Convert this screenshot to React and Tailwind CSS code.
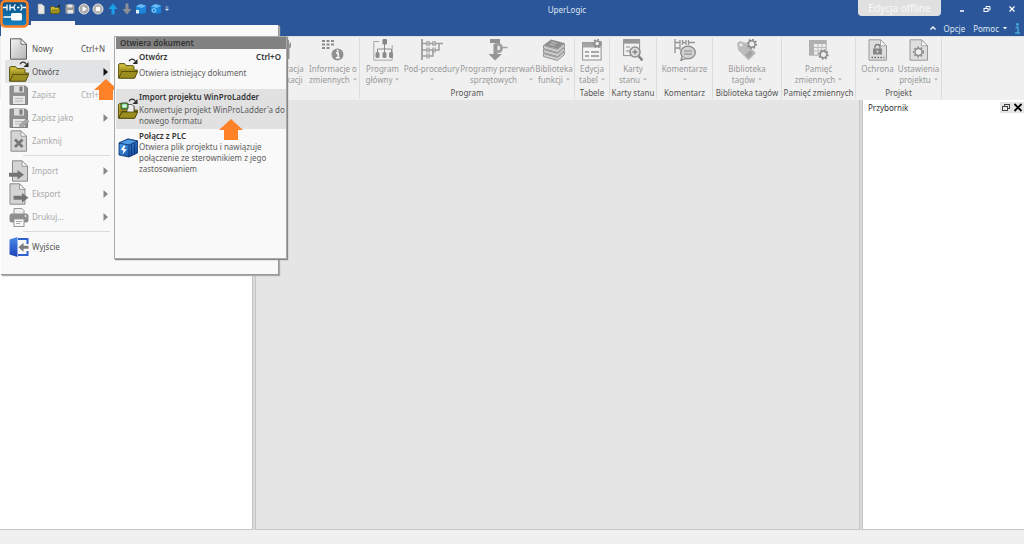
import React from 'react';
import clsx from 'clsx';

/* ---------- shared svg pieces ---------- */

const Defs = () => (
  <svg width="0" height="0" className="absolute" aria-hidden="true">
    <defs>
      <linearGradient id="paper" x1="0" y1="0" x2="1" y2="1">
        <stop offset="0" stopColor="#f4f4f4" />
        <stop offset="1" stopColor="#b4b4b4" />
      </linearGradient>
      <linearGradient id="folder" x1="0" y1="0" x2="0" y2="1">
        <stop offset="0" stopColor="#d8c84a" />
        <stop offset="1" stopColor="#8f7f14" />
      </linearGradient>
      <linearGradient id="logo" x1="0" y1="0" x2="0" y2="1">
        <stop offset="0" stopColor="#0a4f86" />
        <stop offset="1" stopColor="#1583c4" />
      </linearGradient>
      <linearGradient id="cube" x1="0" y1="0" x2="1" y2="1">
        <stop offset="0" stopColor="#4aa6f0" />
        <stop offset="1" stopColor="#0b3f94" />
      </linearGradient>
      <linearGradient id="door" x1="0" y1="0" x2="0" y2="1">
        <stop offset="0" stopColor="#4a8ae8" />
        <stop offset="1" stopColor="#1c43b8" />
      </linearGradient>
    </defs>
  </svg>
);

const Svg = ({ children, className = 'w-5 h-[22px]', box = '0 0 20 22' }) => (
  <svg viewBox={box} className={clsx('shrink-0', className)} fill="none" aria-hidden="true">
    {children}
  </svg>
);

const Paper = () => (
  <>
    <path d="M1.500.8h10.500l5.500 5.500v14.900h-16z" fill="url(#paper)" stroke="#5c5c5c" />
    <path d="M12 .8v5.500h5.500z" fill="#f6f6f6" stroke="#5c5c5c" strokeWidth=".8" />
  </>
);

const DimPaper = () => (
  <>
    <path d="M2 .8h10l5.500 5.500v14.900H2z" fill="#d4d4d4" stroke="#8c8c8c" />
    <path d="M12 .8v5.500h5.500z" fill="#f6f6f6" stroke="#8c8c8c" strokeWidth=".8" />
  </>
);

/* ---------- menu icons ---------- */

const NewIcon = () => <Svg><Paper /></Svg>;

const Folder = () => (
  <>
    <path d="M.5 20V6.500l1-1h5L8 7.500h7l1 1V12h3.500l-3 8z" fill="#a8981f" stroke="#4d440a" strokeWidth=".8" />
    <path d="M1.500 6.500h5L8 8.500h7V14H1.500z" fill="url(#folder)" />
    <path d="M.8 20.200l3-6.700h15.900l-3.100 6.700z" fill="#9c8d20" stroke="#4d440a" strokeWidth=".8" />
    <path d="M11 3.200C12.500.6 15.500.5 17.300 3" stroke="#333" strokeWidth="1.200" />
    <path d="M19.500 1v5h-5z" fill="#2a2a2a" />
  </>
);

const OpenIcon = () => <Svg><Folder /></Svg>;

const ImportProjectIcon = () => (
  <Svg>
    <Folder />
    <path d="M9 6.500h5l2 2V15H9z" fill="#eee" stroke="#444" strokeWidth=".8" />
    <rect x="3" y="5" width="7" height="6" rx="1" fill="#6ad04a" stroke="#333" />
    <rect x="4.500" y="6.500" width="4" height="3" fill="#d4f2fa" />
    <path d="M.8 20.200l3-6.200h15.900l-3.100 6.200z" fill="#9c8d20" stroke="#4d440a" strokeWidth=".8" />
  </Svg>
);

const Floppy = () => (
  <>
    <path d="M1 2h15.500l2 2v16.500H1z" fill="#8f8f8f" stroke="#808080" />
    <rect x="5" y="2" width="10" height="6.500" fill="#dcdcdc" />
    <rect x="10.500" y="2.500" width="3" height="5" fill="#7a7a7a" />
    <rect x="4" y="12" width="12" height="8" fill="#e6e6e6" />
    <path d="M6 14.500h8M6 17h8" stroke="#b5b5b5" />
  </>
);

const SaveIcon = () => <Svg><Floppy /></Svg>;

const SaveAsIcon = () => (
  <Svg>
    <Floppy />
    <path d="M10 21l1-3.500 6.500-5.500 2.500 2.500-6.500 5.500z" fill="#a8a8a8" stroke="#8a8a8a" strokeWidth=".6" />
  </Svg>
);

const CloseIcon = () => (
  <Svg>
    <DimPaper />
    <path d="M6 9.500l7.500 7.500M13.500 9.500L6 17" stroke="#777" strokeWidth="2.800" />
  </Svg>
);

const ImportIcon = () => (
  <Svg>
    <path d="M3.500.8H13l5.500 5.500v14.900h-15z" fill="#d4d4d4" stroke="#8c8c8c" />
    <path d="M13 .8v5.500h5.500z" fill="#f6f6f6" stroke="#8c8c8c" strokeWidth=".8" />
    <path d="M0 12.800h8.500V10l6.500 4.800-6.500 4.800v-2.800H0z" fill="#747474" />
  </Svg>
);

const ExportIcon = () => (
  <Svg>
    <path d="M1 .8h9.500l5.500 5.500v14.900H1z" fill="#d4d4d4" stroke="#8c8c8c" />
    <path d="M10.500.8v5.500h5.500z" fill="#f6f6f6" stroke="#8c8c8c" strokeWidth=".8" />
    <path d="M4.500 12.800h8.500V10l6.500 4.800-6.500 4.800v-2.800H4.500z" fill="#747474" />
  </Svg>
);

const PrintIcon = () => (
  <Svg>
    <path d="M5 9V2.500h8l2 2V9" fill="#eee" stroke="#999" />
    <rect x=".5" y="7.500" width="19" height="9" rx="2.500" fill="#8e8e8e" />
    <circle cx="16.500" cy="10" r=".9" fill="#eee" />
    <rect x="5" y="13" width="10" height="7.500" fill="#f8f8f8" stroke="#999" />
    <path d="M7 15.500h6M7 17.500h4" stroke="#aaa" />
  </Svg>
);

const ExitIcon = () => (
  <Svg>
    <path d="M9 3h9.500v5M9 19h9.500v-4" stroke="#2f62cf" strokeWidth="2" />
    <path d="M.5 3.500L8.500 1v20L.5 18.500z" fill="url(#door)" />
    <path d="M9.500 11.200l5-4.500v3h5v3h-5v3z" fill="#7c7c7c" />
  </Svg>
);

const PlcIcon = () => (
  <Svg>
    <path d="M1 6l9-4 9.500 2v12L11 20 1 18z" fill="url(#cube)" stroke="#0a2f6c" strokeWidth=".8" />
    <path d="M1 6l10 2 8.500-4L10 2z" fill="#4f9be6" stroke="#0a2f6c" strokeWidth=".8" />
    <path d="M11 8v12M13.500 7.200v11.500M16.500 6v11.500" stroke="#0a2f6c" strokeWidth=".8" />
    <path d="M5.500 8.500L3 13l2.500.5L4.500 17.500 8.800 12.500 6 12l1.500-3.200z" fill="#fff" />
  </Svg>
);

/* ---------- ribbon icons ---------- */

const WrenchIcon = () => (
  <Svg box="0 0 22 22" className="w-[22px] h-[22px]">
    <path d="M18 1v4l-2-1v4l1.500 1.500V20h3V9.500L22 8V3l-2 2V1z" fill="#959595" />
    <path d="M2 3h10v3H2zM6 6h3v14H6z" fill="#aaa" />
  </Svg>
);

const VariablesIcon = () => (
  <Svg box="0 0 22 22" className="w-[22px] h-[22px]">
    <path d="M0 2h3M4.500 2h3M9 2h3M0 5.500h3M4.500 5.500h3M9 5.500h3M4.500 9h3M0 9h3" stroke="#8c8c8c" strokeWidth="2.200" />
    <circle cx="15.500" cy="15.500" r="6" fill="#909090" />
    <path d="M14 14h2.200v4.500M13.800 18.700h4" stroke="#fff" strokeWidth="1.400" />
    <circle cx="15.600" cy="11.800" r="1" fill="#fff" />
  </Svg>
);

const ProgramIcon = () => (
  <Svg>
    <path d="M6 2.500H.8v18.700h18.400V6" stroke="#a8a8a8" />
    <path d="M11.500 5v6M4.500 14v-4h14v4M11.500 10v4" stroke="#8c8c8c" />
    <rect x="9.500" y="0" width="4.500" height="5.500" rx="1" fill="#858585" />
    <rect x="2.500" y="13" width="4" height="6" rx="1.500" fill="#8c8c8c" />
    <rect x="9.500" y="13" width="4" height="6" rx="1.500" fill="#8c8c8c" />
    <rect x="16" y="13" width="4" height="6" rx="1.500" fill="#8c8c8c" />
  </Svg>
);

const SubroutineIcon = () => (
  <Svg box="0 0 22 22" className="w-[22px] h-[22px]">
    <path d="M1 0v21" stroke="#909090" strokeWidth="1.600" />
    <path d="M1 4.500h5M8 4.500h4M14 4.500h8M1 11h5M8 11h4M14 11h4V4.500M1 17h5M8 17h4V11" stroke="#a0a0a0" strokeWidth="1.500" />
    <path d="M6 2v5M8 2v5M12 2v5M14 2v5M6 8.500v5M8 8.500v5M12 8.500v5M14 8.500v5M6 14.500v5M8 14.500v5" stroke="#979797" strokeWidth="1.200" />
  </Svg>
);

const InterruptIcon = () => (
  <Svg>
    <path d="M5.500 5h4v10H14l-7 6.500L.5 15h5z" fill="#959595" />
    <path d="M7 5.500h4.500a4 4 0 010 7H7" stroke="#a0a0a0" strokeWidth="3" />
    <path d="M15 8.500h4.500" stroke="#a0a0a0" strokeWidth="1.500" />
    <rect x="2" y="0" width="10" height="4" fill="#909090" />
  </Svg>
);

const BooksIcon = () => (
  <Svg box="0 0 22 22" className="w-[22px] h-[22px]">
    <path d="M.5 6L8 .5 21.500 4l-7 6z" fill="#8f8f8f" />
    <path d="M8.500 3l5 1.500M7 5l5 1.500" stroke="#c8c8c8" />
    <path d="M.5 6.500v3l14 4 7-6v-3l-7 6z" fill="#d0d0d0" stroke="#8a8a8a" strokeWidth=".9" />
    <path d="M.5 10.500v3l14 4 7-6v-3l-7 6z" fill="#d0d0d0" stroke="#8a8a8a" strokeWidth=".9" />
    <path d="M.5 14.500v3l14 4 7-6v-3l-7 6z" fill="#d0d0d0" stroke="#8a8a8a" strokeWidth=".9" />
  </Svg>
);

const Gear = ({ x, y, r = 3.2 }) => (
  <g transform={`translate(${x} ${y})`}>
    <circle r={r + 1.2} stroke="#8c8c8c" strokeWidth="1.800" strokeDasharray="1.700 1.700" />
    <circle r={r} fill="#efefef" stroke="#8c8c8c" strokeWidth="1.400" />
  </g>
);

const EditTableIcon = () => (
  <Svg>
    <rect x=".6" y="3.500" width="18.500" height="17.500" fill="#f4f4f4" stroke="#909090" />
    <rect x=".6" y="3.500" width="18.500" height="5" fill="#a5a5a5" />
    <path d="M3 13h4M9 13h8M3 17h4M9 17h8" stroke="#909090" strokeWidth="1.400" />
    <Gear x={15.2} y={4.5} r={2.5} />
  </Svg>
);

const CardIcon = () => (
  <Svg>
    <rect x=".6" y=".6" width="16" height="16" fill="#f0f0f0" stroke="#909090" />
    <rect x=".6" y=".6" width="16" height="4" fill="#989898" />
    <path d="M3 8h4M3 12h4" stroke="#909090" />
    <path d="M15.500 17l4 4.500" stroke="#858585" strokeWidth="2.600" />
    <circle cx="12" cy="13" r="5" fill="#ddd" stroke="#909090" strokeWidth="1.600" />
    <path d="M9.500 13h5M12 10.500v5" stroke="#858585" strokeWidth="1.300" />
  </Svg>
);

const CommentIcon = () => (
  <Svg box="0 0 22 22" className="w-[22px] h-[22px]">
    <path d="M1 0v14M1 3.500h5M8 3.500h4M14 3.500h7M6 1v10M8.500 1v5M12 1v5M14.500 1v5M1 9h5" stroke="#959595" strokeWidth="1.300" />
    <ellipse cx="14" cy="13.500" rx="7.300" ry="6.300" fill="#d2d2d2" stroke="#8a8a8a" strokeWidth="1.300" />
    <path d="M8.300 17l-1.500 4.500 5-2" fill="#d2d2d2" stroke="#8a8a8a" strokeWidth="1.200" />
    <path d="M10 12h8M10 15h8" stroke="#8a8a8a" strokeWidth="1.200" />
  </Svg>
);

const TagsIcon = () => (
  <Svg>
    <path d="M0 4l3-2 6 2 10 10-7.500 7.500L1 11z" fill="#bcbcbc" />
    <path d="M8 16l5-5 3.500 3.500-5 5z" fill="#a4a4a4" />
    <circle cx="4" cy="6" r="1.500" fill="#f0f0f0" />
    <Gear x={14.8} y={5} />
  </Svg>
);

const MemoryIcon = () => (
  <Svg>
    <rect x=".6" y="1.600" width="16.500" height="14.500" fill="#eee" stroke="#a5a5a5" />
    <path d="M.6 1.600h16.500v3.500H5v11H.6z" fill="#b0b0b0" />
    <path d="M5 8.500h12M5 12h12M9 5v11M13 5v11" stroke="#bbb" />
    <Gear x={14.5} y={15.5} />
  </Svg>
);

const LockIcon = () => (
  <Svg>
    <path d="M1 .8h11.500l6 6v14.400H1z" fill="#dedede" stroke="#9a9a9a" />
    <path d="M12.500.8v6h6z" fill="#f6f6f6" stroke="#9a9a9a" strokeWidth=".8" />
    <path d="M7 9.500V8a2.500 2.500 0 015 0v2.500" stroke="#7c7c7c" strokeWidth="1.300" />
    <rect x="5" y="9.500" width="9" height="6" fill="#868686" />
    <circle cx="9.500" cy="12.500" r="1" fill="#ddd" />
    <path d="M3.500 18.500h13" stroke="#666" strokeWidth="1.500" strokeDasharray="1.500 1.500" />
  </Svg>
);

const ProjectSettingsIcon = () => (
  <Svg>
    <path d="M1 .8h11.500l6 6v14.400H1z" fill="#dedede" stroke="#9a9a9a" />
    <path d="M12.500.8v6h6z" fill="#f6f6f6" stroke="#9a9a9a" strokeWidth=".8" />
    <Gear x={9.5} y={13} r={3.5} />
  </Svg>
);

const Caret = () => (
  <svg viewBox="0 0 4 3" className="w-1 h-[3px] shrink-0" aria-hidden="true">
    <path d="M0 .5h4L2 2.500z" fill="#b0b0b0" />
  </svg>
);

const OrangeArrow = ({ className }) => (
  <svg viewBox="0 0 24 21" className={className} aria-hidden="true">
    <path d="M12 0l12 11h-5v10H5V11H0z" fill="#ff8128" />
  </svg>
);

/* ---------- data ---------- */

const quickAccess = [
  { name: 'Nowy', art: <path d="M3 1h4l2.500 2.500V11H3z" fill="#e8e8e8" stroke="#888" strokeWidth=".6" /> },
  {
    name: 'Otwórz',
    art: (
      <>
        <path d="M1.500 10.500v-7H5l1 1h4V6h1l-1.200 4.500z" fill="#c9b82c" stroke="#3f380c" strokeWidth=".5" />
        <path d="M2 10.500L3.500 7h8L10 10.500z" fill="#a3931d" stroke="#3f380c" strokeWidth=".4" />
        <path d="M11 1v3H8z" fill="#222" />
      </>
    ),
  },
  {
    name: 'Zapisz',
    art: (
      <>
        <path d="M1.500 1.500h8l1 1v8h-9z" fill="#999" />
        <path d="M3.500 1.500h5v3h-5zM3.500 7H9v3.500H3.500z" fill="#e8e8e8" />
      </>
    ),
  },
  {
    name: 'Uruchom',
    art: (
      <>
        <circle cx="6" cy="6" r="5" fill="#aaa" stroke="#e2e2e2" />
        <path d="M4.500 3.200L9 6 4.500 8.800z" fill="#fff" />
      </>
    ),
  },
  {
    name: 'Zatrzymaj',
    art: (
      <>
        <circle cx="6" cy="6" r="5" fill="#aaa" stroke="#e2e2e2" />
        <rect x="3.800" y="3.800" width="4.400" height="4.400" fill="#fff" />
      </>
    ),
  },
  { name: 'Wyślij', art: <path d="M6 .5L10.500 6h-3v5.500h-3V6h-3z" fill="#1aa0e6" /> },
  { name: 'Pobierz', art: <path d="M6 11.500L1.500 6h3V.5h3V6h3z" fill="#8d8f94" /> },
  {
    name: 'Połącz',
    art: (
      <>
        <path d="M1 3.500L5 1l6 1.500v7L7 11 1 9z" fill="#1b86dc" />
        <path d="M1 3.500L5 1l6 1.500L7 5z" fill="#69baf5" />
        <path d="M1 7h3v3.500H1z" fill="#dff0ff" />
      </>
    ),
  },
  {
    name: 'Symulacja',
    art: (
      <>
        <path d="M1 3.500L5 1l6 1.500v7L7 11 1 9z" fill="#1b86dc" />
        <path d="M1 3.500L5 1l6 1.500L7 5z" fill="#69baf5" />
        <circle cx="4" cy="7.500" r="1.800" stroke="#9ed3ff" fill="none" />
      </>
    ),
  },
];

const ribbonGroups = [
  {
    label: '',
    width: 'w-[360px]',
    items: [
      { icon: <WrenchIcon />, top: 'Konfiguracja', bottom: 'komunikacji', noCaret: true, width: 'w-[54px]' },
      { icon: <VariablesIcon />, top: 'Informacje o', bottom: 'zmiennych', width: 'w-[52px]' },
    ],
  },
  {
    label: 'Program',
    width: 'w-[215px]',
    items: [
      { icon: <ProgramIcon />, top: 'Program', bottom: 'główny', width: 'w-[42px]' },
      { icon: <SubroutineIcon />, top: 'Pod-procedury', bottom: '', width: 'w-14' },
      { icon: <InterruptIcon />, top: 'Programy przerwań', bottom: 'sprzętowych', spread: true, width: 'w-[76px]' },
      { icon: <BooksIcon />, top: 'Biblioteka', bottom: 'funkcji', width: 'w-[37px]' },
    ],
  },
  {
    label: 'Tabele',
    width: 'w-[35px]',
    items: [{ icon: <EditTableIcon />, top: 'Edycja', bottom: 'tabel', width: 'w-8' }],
  },
  {
    label: 'Karty stanu',
    width: 'w-[47px]',
    items: [{ icon: <CardIcon />, top: 'Karty', bottom: 'stanu', width: 'w-11' }],
  },
  {
    label: 'Komentarz',
    width: 'w-14',
    items: [{ icon: <CommentIcon />, top: 'Komentarze', bottom: '', width: 'w-[52px]' }],
  },
  {
    label: 'Biblioteka tagów',
    width: 'w-[69px]',
    items: [{ icon: <TagsIcon />, top: 'Biblioteka', bottom: 'tagów', width: 'w-16' }],
  },
  {
    label: 'Pamięć zmiennych',
    width: 'w-[74px]',
    items: [{ icon: <MemoryIcon />, top: 'Pamięć', bottom: 'zmiennych', width: 'w-[68px]' }],
  },
  {
    label: 'Projekt',
    width: 'w-[86px]',
    items: [
      { icon: <LockIcon />, top: 'Ochrona', bottom: '', width: 'w-10' },
      { icon: <ProjectSettingsIcon />, top: 'Ustawienia', bottom: 'projektu', width: 'w-[42px]' },
    ],
  },
];

const menuSections = [
  [
    { icon: <NewIcon />, label: 'Nowy', shortcut: 'Ctrl+N' },
    { icon: <OpenIcon />, label: 'Otwórz', arrow: true, active: true },
    { icon: <SaveIcon />, label: 'Zapisz', shortcut: 'Ctrl+S', disabled: true },
    { icon: <SaveAsIcon />, label: 'Zapisz jako', arrow: true, disabled: true },
    { icon: <CloseIcon />, label: 'Zamknij', disabled: true },
  ],
  [
    { icon: <ImportIcon />, label: 'Import', arrow: true, disabled: true },
    { icon: <ExportIcon />, label: 'Eksport', arrow: true, disabled: true },
    { icon: <PrintIcon />, label: 'Drukuj...', arrow: true, disabled: true },
  ],
  [{ icon: <ExitIcon />, label: 'Wyjście' }],
];

/* ---------- components ---------- */

const TitleBar = () => (
  <header className="bg-[#2b579a] text-[#dfe6f2] h-9 shrink-0">
    <div className="flex items-start h-5">
      <div className="flex items-center justify-between h-[18px] w-[170px] pl-[35px]">
        {quickAccess.map((q) => (
          <button key={q.name} aria-label={q.name} className="block">
            <svg viewBox="0 0 12 12" className="w-3 h-3">{q.art}</svg>
          </button>
        ))}
        <svg viewBox="0 0 6 6" className="w-[6px] h-[6px]" aria-hidden="true">
          <path d="M1.500 1h3M1.500 3h3L3 4.500z" stroke="#dfe6f2" fill="#dfe6f2" strokeWidth=".7" />
        </svg>
      </div>
      <h1 className="flex-1 text-center pl-[106px] leading-5">UperLogic</h1>
      <span className="w-[83px] h-4 rounded-b bg-[#e0e0e0] text-[#f8f8f8] text-[10px] leading-[17px] text-center">
        Edycja offline
      </span>
      <div className="flex items-center justify-around w-[83px] h-[17px] pl-[9px]">
        <button aria-label="Minimalizuj" className="w-5 flex justify-center">
          <svg viewBox="0 0 8 8" className="w-2 h-2"><path d="M2 6h4" stroke="#fff" strokeWidth="1.500" /></svg>
        </button>
        <button aria-label="Przywróć" className="w-5 flex justify-center">
          <svg viewBox="0 0 8 8" className="w-2 h-2" fill="none" stroke="#fff">
            <path d="M3 3V1.500h4V5H5.500" /><rect x="1" y="3.500" width="4" height="3" />
          </svg>
        </button>
        <button aria-label="Zamknij" className="w-5 flex justify-center">
          <svg viewBox="0 0 8 8" className="w-2 h-2"><path d="M1.500 1.500l5 5M6.500 1.500l-5 5" stroke="#fff" strokeWidth="1.200" /></svg>
        </button>
      </div>
    </div>
    <div className="flex items-start justify-between h-4">
      <button aria-label="Plik" className="ml-[31px] mt-px w-11 h-4 bg-[#f7f7f7]" />
      <div className="flex items-center h-4 pr-1 gap-2">
        <button aria-label="Zwiń wstążkę">
          <svg viewBox="0 0 6 6" className="w-[6px] h-[6px]"><path d="M.5 4.500L3 2l2.500 2.500" stroke="#fff" strokeWidth="1.300" fill="none" /></svg>
        </button>
        <button>Opcje</button>
        <button className="flex items-center gap-1">
          Pomoc
          <svg viewBox="0 0 4 3" className="w-1 h-[3px]"><path d="M0 0h4L2 2.500z" fill="#fff" /></svg>
        </button>
        <svg viewBox="0 0 5 11" className="w-[5px] h-[11px]" aria-hidden="true">
          <circle cx="2.500" cy="1.500" r="1.400" fill="#4aa8dc" />
          <path d="M.5 4.500h2.500v5M0 10h5" stroke="#4aa8dc" strokeWidth="1.400" fill="none" />
        </svg>
      </div>
    </div>
  </header>
);

const RibbonButton = ({ icon, top, bottom, width, noCaret, spread }) => (
  <button disabled className={clsx('flex flex-col items-center text-[#999] leading-[11px] whitespace-nowrap', width)}>
    {icon}
    <span className="mt-[2px] h-[11px]">{top}</span>
    <span className={clsx('flex items-center justify-center h-[11px]', spread ? 'gap-3 pl-2' : 'gap-[3px]')}>
      {bottom && <span>{bottom}</span>}
      {!noCaret && <Caret />}
    </span>
  </button>
);

const Ribbon = () => (
  <div className="flex shrink-0 h-16 pt-px pb-px bg-[#f0f0f0] border-t border-[#dcdfe6] overflow-hidden">
    {ribbonGroups.map((g) => (
      <section key={g.width + g.label} className={clsx('flex flex-col shrink-0 pt-px border-r border-[#dcdcdc]', g.width)}>
        <div className={clsx('flex h-[47px]', g.label ? 'justify-center' : 'justify-end')}>
          {g.items.map((item) => (
            <RibbonButton key={item.top} {...item} />
          ))}
        </div>
        {g.label && <h2 className="text-center leading-[13px] text-[#555] whitespace-nowrap">{g.label}</h2>}
      </section>
    ))}
  </div>
);

const MenuItem = ({ icon, label, shortcut, arrow, active, disabled }) => (
  <button
    disabled={disabled}
    className={clsx(
      'flex items-center w-full h-[23px] pl-1 pr-[2px] text-left',
      active && 'bg-[#e2e3e5]',
      disabled ? 'text-[#a9a9a9]' : 'text-[#505050]'
    )}
  >
    {icon}
    <span className="ml-[3px] flex-1">{label}</span>
    {shortcut && <span className="w-6 mr-[3px]">{shortcut}</span>}
    {arrow && (
      <svg viewBox="0 0 5 8" className="w-[5px] h-2" aria-hidden="true">
        <path d="M.5 0L5 4 .5 8z" fill={active ? '#111' : '#888'} />
      </svg>
    )}
  </button>
);

const SubItem = ({ icon, title, shortcut, children, active, className }) => (
  <button
    className={clsx(
      'flex w-full pl-[2px] pr-1 text-left leading-[11px] whitespace-nowrap text-[#606060]',
      active && 'bg-[#e1e1e1]',
      className
    )}
  >
    <span className="pt-[7px]">{icon}</span>
    <span className="ml-px flex-1 min-w-0">
      <span className="flex justify-between font-semibold text-[#333]">
        <span>{title}</span>
        {shortcut && <span className="pr-px">{shortcut}</span>}
      </span>
      {children}
    </span>
  </button>
);

const FileMenu = () => (
  <div className="absolute left-px top-[25px] w-[278px] h-[250px] pt-3 pl-1 bg-[#f9f9f9] border-b border-r border-[#999] shadow-[1px_1px_1px_#aaa]">
    <nav className="w-[110px] h-[222px] border-r border-[#dcdcdc] pr-1">
      {menuSections.map((items, i) => (
        <React.Fragment key={i}>
          {i > 0 && <hr className="my-[3px] ml-[18px] border-[#dcdcdc]" />}
          {items.map((item) => (
            <MenuItem key={item.label} {...item} />
          ))}
        </React.Fragment>
      ))}
    </nav>
    <OrangeArrow className="absolute left-[93px] top-[54px] w-6 h-[21px]" />
  </div>
);

const OpenSubmenu = () => (
  <div className="absolute left-[114px] top-9 w-[173px] h-[223px] pl-px bg-[#f9f9f9] border border-[#aaa] shadow-[1px_1px_1px_#888]">
    <h2 className="h-3 pl-1 leading-3 font-semibold text-[#333] bg-[#828282]">Otwiera dokument</h2>
    <SubItem icon={<OpenIcon />} title="Otwórz" shortcut="Ctrl+O" className="h-10 pt-[2px]">
      <span className="block mt-[5px]">Otwiera istniejący dokument</span>
    </SubItem>
    <SubItem icon={<ImportProjectIcon />} title="Import projektu WinProLadder" active className="h-10 pt-[2px]">
      <span className="block mt-[2px]">Konwertuje projekt WinProLadder'a do<br />nowego formatu</span>
    </SubItem>
    <SubItem icon={<PlcIcon />} title="Połącz z PLC" className="pt-px">
      <span className="block">Otwiera plik projektu i nawiązuje<br />połączenie ze sterownikiem z jego<br />zastosowaniem</span>
    </SubItem>
    <OrangeArrow className="absolute left-[104px] top-[82px] w-6 h-[21px]" />
  </div>
);

const AppLogo = () => (
  <button aria-label="Menu aplikacji" className="absolute left-0 top-0 w-[29px] h-7">
    <svg viewBox="0 0 29 28" className="w-[29px] h-7">
      <rect x="1.500" y="1" width="26" height="25.500" rx="4" fill="url(#logo)" stroke="#f58025" strokeWidth="2.600" />
      <path d="M3 7.500h4M10 7.500h4M17 7.500h2.500M22.500 7.500H26M3.500 17h8" stroke="#fff" strokeWidth="1.300" />
      <path d="M7 4.500v6M10 4.500v6M15.500 4.500c-2 1.500-2 4.500 0 6M20.500 4.500c2 1.500 2 4.500 0 6" stroke="#fff" strokeWidth="1.300" fill="none" />
      <rect x="11" y="13" width="11" height="7.500" rx="1.500" fill="#fff" />
    </svg>
  </button>
);

const Workspace = () => (
  <main className="flex flex-1 gap-[2px] bg-[#dadada]">
    <aside className="w-[253px] bg-white border-r border-b border-[#c6c6c6]" />
    <div className="flex-1 bg-[#e5e5e5] border-x border-b border-[#c6c6c6]" />
    <aside className="w-[162px] bg-white border-l border-b border-[#c6c6c6]">
      <div className="flex items-center h-[14px] pl-[5px] text-[#333]">
        <h2 className="flex-1">Przybornik</h2>
        <button aria-label="Odepnij" className="bg-[#e4e4e4] p-px">
          <svg viewBox="0 0 10 9" className="w-[10px] h-[9px]" fill="none" stroke="#444">
            <rect x="3.500" y="1.500" width="5" height="4" /><rect x="1.500" y="3.500" width="5" height="4" fill="#ececec" />
          </svg>
        </button>
        <button aria-label="Zamknij przybornik" className="bg-[#e4e4e4] p-px">
          <svg viewBox="0 0 9 9" className="w-[10px] h-[9px]"><path d="M1 1l7 7M8 1L1 8" stroke="#000" strokeWidth="1.800" /></svg>
        </button>
      </div>
    </aside>
  </main>
);

export default function App() {
  return (
    <div className="relative flex flex-col min-h-screen bg-[#f0f0f0] text-[8px] leading-[11px] font-['Noto_Sans','Open_Sans',sans-serif]">
      <Defs />
      <TitleBar />
      <Ribbon />
      <Workspace />
      <footer className="h-[14px] shrink-0 bg-[#f0f0f0]" />
      <FileMenu />
      <OpenSubmenu />
      <AppLogo />
    </div>
  );
}
